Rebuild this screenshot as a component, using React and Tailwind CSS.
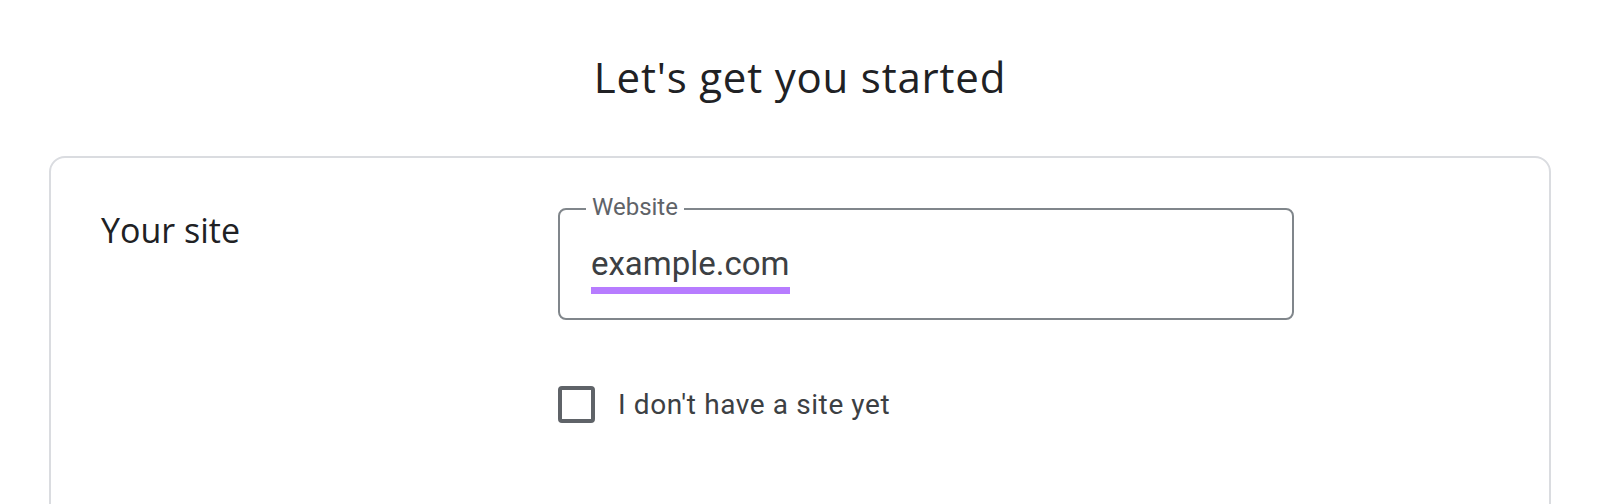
export default function App() {
  return (
    <div className="h-[504px] overflow-hidden bg-white">
      <h1 className="pt-[53px] mb-[55px] text-center font-['Open_Sans',sans-serif] text-[42px] leading-[48px] font-normal tracking-[0.8px] text-[#202124]">
        Let's get you started
      </h1>

      <div className="mx-[49px] h-[600px] rounded-[16px] border-2 border-[#dadce0] px-[50px] pt-[50px] flex">
        <div className="w-[457px] shrink-0 pt-[2px] font-['Open_Sans',sans-serif] text-[34px] leading-[40px] text-[#202124]">
          Your site
        </div>

        <div className="flex flex-col">
          <div className="relative h-[112px] w-[736px] rounded-[8px] border-2 border-[#80868b] pl-[31px] pt-[35px] font-['Roboto',sans-serif]">
            <span className="absolute left-[26px] top-[-15px] bg-white px-[6px] text-[24px] leading-[24px] text-[#5f6368]">
              Website
            </span>
            <div className="w-fit">
              <div className="text-[33px] leading-[37px] text-[#3c4043]">example.com</div>
              <div className="mt-[5px] h-[7px] w-full bg-[#b77cff]" />
            </div>
          </div>

          <label className="mt-[66px] flex items-center gap-[23px] font-['Roboto',sans-serif]">
            <span className="h-[37px] w-[37px] rounded-[4px] border-4 border-[#5f6368]" />
            <span className="text-[28px] leading-[32px] tracking-[0.6px] text-[#3c4043]">I don't have a site yet</span>
          </label>
        </div>
      </div>
    </div>
  )
}
